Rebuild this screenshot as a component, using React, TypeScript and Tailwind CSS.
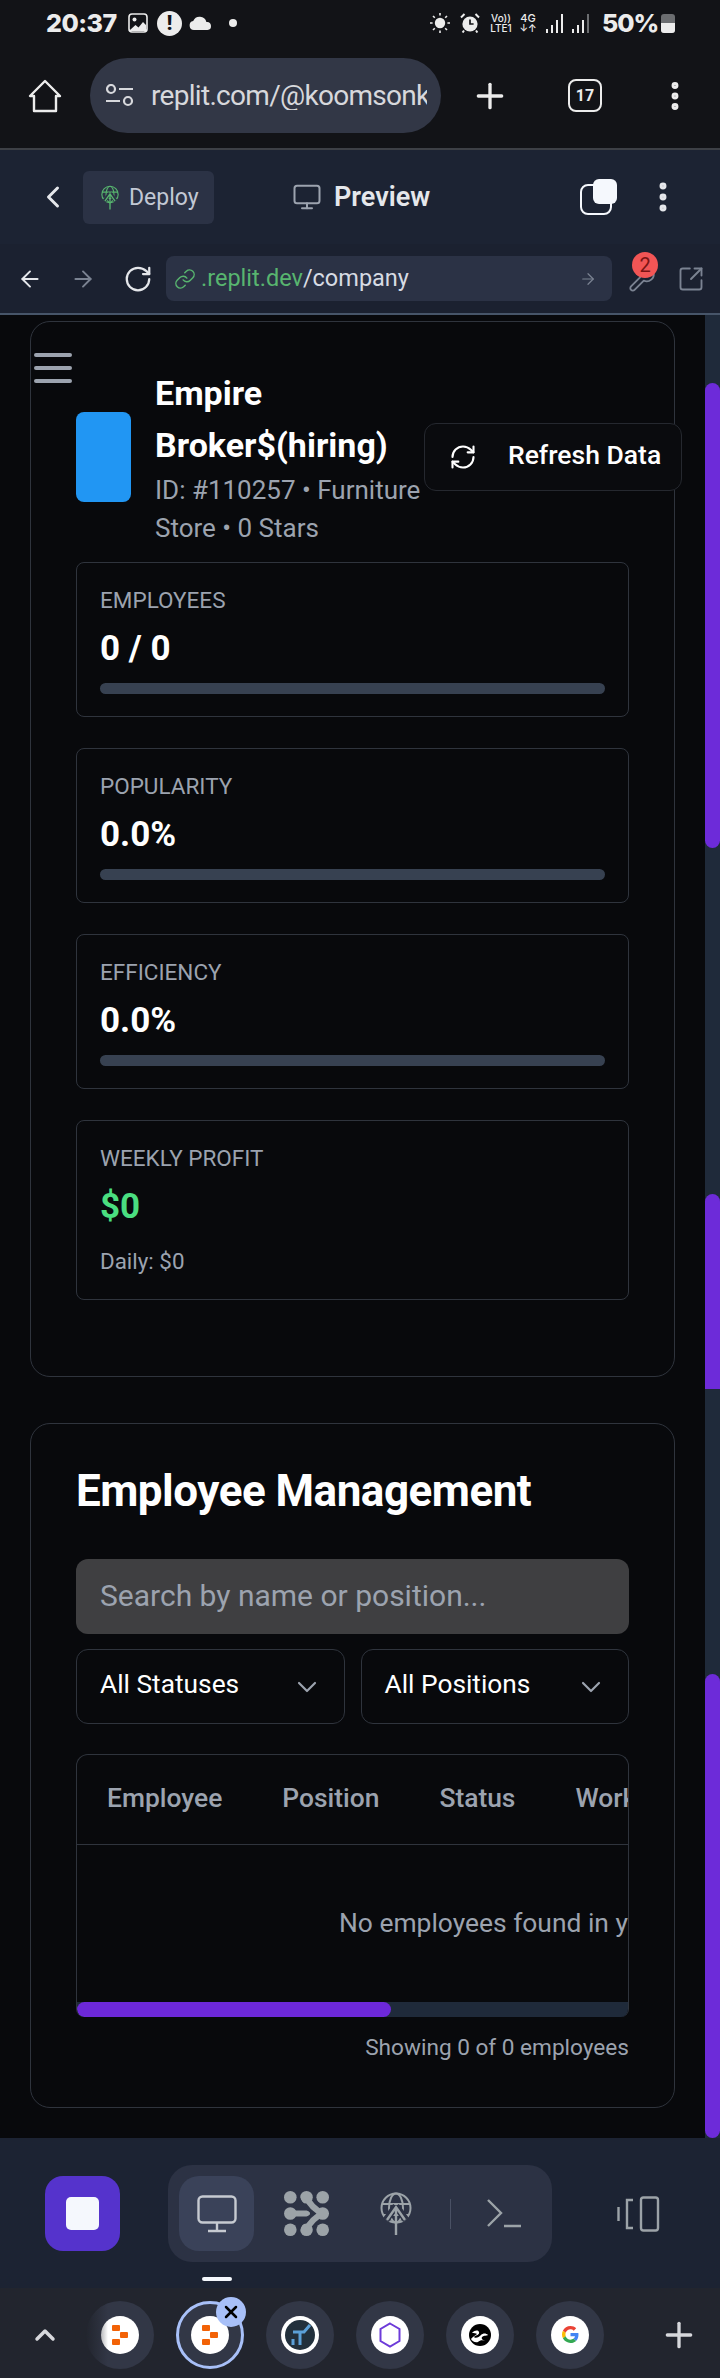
import { ArrowLeft, ArrowRight, ChevronDown, ChevronLeft, ChevronUp, EllipsisVertical, Link, Monitor, Plus, RefreshCw, RotateCw, SquareArrowOutUpRight, Wrench, X } from 'lucide-react'

const Sun = () => (
  <svg width="20" height="20" viewBox="0 0 20 20" className="shrink-0 text-[#ececec]">
    <circle cx="10" cy="10" r="5.2" fill="currentColor" />
    <path d="M10 0v2.6M10 17.4V20M0 10h2.6M17.4 10H20M3 3l1.8 1.8M15.2 15.2 17 17M3 17l1.8-1.8M15.2 4.8 17 3" stroke="currentColor" strokeWidth="1.6" />
  </svg>
)

const Alarm = () => (
  <svg width="20" height="20" viewBox="0 0 20 20" className="shrink-0">
    <circle cx="10" cy="11" r="7.6" fill="#ececec" />
    <path d="M10 6.5V11h3.6" stroke="#121317" strokeWidth="1.7" fill="none" />
    <path d="M1 4.5 4.5 1M19 4.5 15.5 1M4 17.5 2.6 19.5M16 17.5l1.4 2" stroke="#ececec" strokeWidth="2" />
  </svg>
)

const Signal = ({ dim }: { dim?: boolean }) => (
  <svg width="18" height="19" viewBox="0 0 18 19" className="shrink-0">
    <rect x="0" y="15" width="2" height="4" fill="#ececec" />
    <rect x="5" y="11" width="2" height="8" fill="#ececec" />
    <rect x="10" y="6" width="2" height="13" fill="#ececec" />
    <rect x="15" y="0" width="2" height="19" fill={dim ? '#6b6d70' : '#ececec'} />
  </svg>
)

const GlobeArrow = ({ className, cut }: { className: string; cut: string }) => (
  <svg viewBox="0 0 32 43" fill="none" stroke="currentColor" strokeWidth="2" className={className}>
    <circle cx="16" cy="16" r="14.5" />
    <ellipse cx="16" cy="16" rx="7" ry="14.5" />
    <path d="M2 12h28M4 23h24" />
    <path d="M16 14 6 28M16 14l10 14" stroke={cut} strokeWidth="7" />
    <path d="M16 43V15M7 28l9-13 9 13" strokeWidth="2.4" />
  </svg>
)

const Blobs = () => (
  <svg width="45" height="45" viewBox="0 0 45 45" fill="#9ca3a8" className="shrink-0">
    <circle cx="6.300" cy="6.300" r="6.300" />
    <circle cx="22.500" cy="6.300" r="6.300" />
    <circle cx="38.700" cy="6.300" r="6.300" />
    <circle cx="6.300" cy="22.500" r="6.300" />
    <circle cx="38.700" cy="22.500" r="6.300" />
    <circle cx="6.300" cy="38.700" r="6.300" />
    <circle cx="22.500" cy="38.700" r="6.300" />
    <circle cx="38.700" cy="38.700" r="6.300" />
    <path d="M22.500 6Q27 17 39 22.500 27 28 22.500 39" fill="none" stroke="#9ca3a8" strokeWidth="6" />
    <path d="M6 22.500h17" fill="none" stroke="#9ca3a8" strokeWidth="6" strokeLinecap="round" />
    <path d="M13.500 1Q17 16 29 22.500 17 29 13.500 44" fill="none" stroke="#2c3244" strokeWidth="1.700" />
  </svg>
)

const ReplitMark = () => (
  <svg width="16" height="20" viewBox="0 0 16 20" fill="#f26207">
    <rect x="0" y="0" width="8" height="6" rx="1" />
    <rect x="8" y="7" width="8" height="6" rx="1" />
    <rect x="0" y="14" width="8" height="6" rx="1" />
  </svg>
)

const TabCircle = ({ children, active }: { children: React.ReactNode; active?: boolean }) => (
  <div className={`relative flex h-[68px] w-[68px] shrink-0 items-center justify-center rounded-full bg-[#323746] ${active ? 'border-[3px] border-[#a8c0f8]' : ''}`}>
    <div className="flex h-[38px] w-[38px] items-center justify-center overflow-hidden rounded-full bg-white">{children}</div>
    {active && (
      <div className="absolute -right-[5px] -top-[7px] flex h-[30px] w-[30px] items-center justify-center rounded-full bg-[#a8c0f8]">
        <X size={20} strokeWidth={3} className="text-black" />
      </div>
    )}
  </div>
)

const StatCard = ({ label, value }: { label: string; value: string }) => (
  <div className="rounded-[8px] border border-[#2f343d] px-[23px] pb-[22px] pt-[23px]">
    <div className="text-[22.500px] leading-[28px] text-[#9ca3af]">{label}</div>
    <div className="mt-[15px] text-[35px] font-bold leading-[40px] text-white">{value}</div>
    <div className="mt-[14px] h-[11px] rounded-full bg-[#374151]" />
  </div>
)

export default function App() {
  return (
    <div className="flex h-[2378px] w-[720px] flex-col overflow-hidden bg-[#08090c] font-[Roboto,sans-serif]">
      {/* phone status bar */}
      <div className="flex h-[46px] shrink-0 items-center bg-[#121317] pl-[46px] pr-[45px] text-[#ececec]">
        <span className="w-[71px] font-[Inter,sans-serif] text-[25px] font-extrabold leading-none tracking-[-0.5px]">20:37</span>
        <svg width="20" height="20" viewBox="0 0 20 20" className="ml-[11px] shrink-0">
          <rect x="1" y="1" width="18" height="18" rx="3" fill="none" stroke="#ececec" strokeWidth="1.6" />
          <circle cx="6.5" cy="6.5" r="2" fill="#ececec" />
          <path d="M2 17l5.5-5 3 2.5L15 9l3 3v6H2z" fill="#ececec" />
        </svg>
        <div className="ml-[9px] flex h-[25px] w-[25px] items-center justify-center rounded-full bg-[#ececec] text-[20px] font-black leading-none text-[#121317]">!</div>
        <svg width="23" height="14" viewBox="0 0 23 14" className="ml-[7px] shrink-0">
          <path d="M5 14a4.5 4.5 0 0 1-.8-8.9A7 7 0 0 1 17.4 6 4 4 0 0 1 18.500 14z" fill="#ececec" />
        </svg>
        <div className="ml-[17px] h-[8px] w-[8px] rounded-full bg-[#ececec]" />
        <div className="ml-auto flex items-center">
          <Sun />
          <div className="ml-[10px]"><Alarm /></div>
          <div className="ml-[9px] flex w-[24px] flex-col items-center font-[Inter,sans-serif] text-[10px] font-medium leading-[10px]">
            <span>Vo))</span>
            <span>LTE1</span>
          </div>
          <div className="ml-[7px] flex w-[16px] flex-col items-center font-[Inter,sans-serif] text-[11px] font-medium leading-[10px]">
            <span>4G</span>
            <span className="text-[10px]">↓↑</span>
          </div>
          <div className="ml-[10px]"><Signal /></div>
          <div className="ml-[8px]"><Signal dim /></div>
          <span className="ml-[12px] w-[55px] font-[Inter,sans-serif] text-[25px] font-extrabold leading-none tracking-[-1px]">50%</span>
          <div className="ml-[4px] flex h-[19px] w-[14px] flex-col overflow-hidden rounded-[3px] bg-[#6b6d70]">
            <div className="mt-auto h-[10px] bg-[#ececec]" />
          </div>
        </div>
      </div>

      {/* browser bar */}
      <div className="flex h-[102px] shrink-0 items-center bg-[#121317] pb-[3px] text-[#ececec]">
        <svg width="34" height="34" viewBox="0 0 34 34" fill="none" stroke="#ececec" strokeWidth="2.4" strokeLinejoin="round" className="ml-[28px] shrink-0">
          <path d="M17 2 2 17h4v15h22V17h4z" />
        </svg>
        <div className="ml-[28px] flex h-[75px] w-[351px] items-center rounded-full bg-[#323746] pl-[16px]">
          <svg width="28" height="23" viewBox="0 0 28 23" fill="none" stroke="#d7d8dc" strokeWidth="2.2" className="shrink-0">
            <circle cx="5" cy="5" r="4" />
            <path d="M13 5h14M0 17h14" />
            <circle cx="22" cy="17" r="4" />
          </svg>
          <div className="ml-[17px] w-[276px] overflow-hidden whitespace-nowrap text-[28px] leading-none tracking-[-0.7px] text-[#d7d8dc]">replit.com/@koomsonkw</div>
        </div>
        <Plus size={40} strokeWidth={2} className="ml-[29px] shrink-0" />
        <div className="ml-[58px] flex h-[33px] w-[34px] items-center justify-center rounded-[8px] border-[2.5px] border-[#ececec] text-[16px] font-bold leading-none">17</div>
        <EllipsisVertical size={36} strokeWidth={2.6} className="ml-[55px] shrink-0" />
      </div>
      <div className="h-[2px] shrink-0 bg-[#3d4046]" />

      {/* replit header */}
      <div className="flex h-[94px] shrink-0 items-center bg-[#1c2333]">
        <ChevronLeft size={36} strokeWidth={2} className="ml-[35px] shrink-0 text-[#e5e7eb]" />
        <div className="ml-[12px] flex h-[53px] w-[131px] items-center rounded-[6px] bg-[#2b3245] pl-[18px]">
          <GlobeArrow className="h-[27px] w-[18px] shrink-0 text-[#58b56f]" cut="#2b3245" />
          <span className="ml-[10px] text-[23px] leading-none text-[#c2c8d4]">Deploy</span>
        </div>
        <Monitor size={30} strokeWidth={1.6} className="ml-[78px] shrink-0 text-[#9ca3af]" />
        <span className="ml-[12px] w-[95px] text-[27px] font-semibold leading-none text-[#e5e7eb]">Preview</span>
        <div className="relative ml-[151px] h-[36px] w-[37px] shrink-0">
          <div className="absolute bottom-0 left-0 h-[31px] w-[32px] rounded-[8px] border-[2.5px] border-[#f5f8fd]" />
          <div className="absolute right-0 top-0 h-[25px] w-[24px] rounded-[6px] bg-[#f5f8fd]" />
        </div>
        <EllipsisVertical size={38} strokeWidth={2.4} className="ml-[27px] shrink-0 text-[#e5e7eb]" />
      </div>

      {/* replit url row */}
      <div className="flex h-[69px] shrink-0 items-center bg-[#1b2130]">
        <ArrowLeft size={26} strokeWidth={1.8} className="ml-[17px] shrink-0 text-[#e5e7eb]" />
        <ArrowRight size={26} strokeWidth={1.8} className="ml-[27px] shrink-0 text-[#7b8392]" />
        <RotateCw size={30} strokeWidth={1.8} className="ml-[27px] shrink-0 text-[#e5e7eb]" />
        <div className="ml-[13px] flex h-[45px] w-[446px] shrink-0 items-center rounded-[8px] bg-[#2b3245] pl-[8px] pr-[15px]">
          <Link size={22} strokeWidth={1.6} className="shrink-0 text-[#58b56f]" />
          <span className="ml-[5px] text-[23.500px] leading-none text-[#58b56f]">.replit.dev</span>
          <span className="text-[23.500px] leading-none text-[#d7dbe3]">/company</span>
          <ArrowRight size={18} strokeWidth={1.6} className="ml-auto shrink-0 text-[#7b8392]" />
        </div>
        <div className="relative ml-[16px] shrink-0">
          <Wrench size={28} strokeWidth={1.6} className="text-[#7b8392]" />
          <div className="absolute -right-[2px] -top-[13px] flex h-[26px] w-[26px] items-center justify-center rounded-full bg-[#f25555] text-[20px] leading-none text-[#7a1414]">2</div>
        </div>
        <SquareArrowOutUpRight size={28} strokeWidth={1.6} className="ml-[21px] shrink-0 text-[#7b8392]" />
      </div>
      <div className="h-[2px] shrink-0 bg-[#475569]" />

      {/* page */}
      <div className="flex min-h-0 flex-1">
        <div className="w-[705px] shrink-0 pl-[30px] pt-[6px]">
          <div className="relative w-[645px] rounded-[20px] border border-[#2f343d] px-[45px] pb-[76px] pt-[45px]">
            <div className="absolute left-[3px] top-[31px] flex w-[38px] flex-col gap-[9px]">
              <div className="h-[4px] rounded-full bg-[#9ca3af]" />
              <div className="h-[4px] rounded-full bg-[#9ca3af]" />
              <div className="h-[4px] rounded-full bg-[#9ca3af]" />
            </div>
            <div className="mb-[15px] flex items-center">
              <div className="h-[90px] w-[55px] shrink-0 rounded-[8px] bg-[#2196f3]" />
              <div className="ml-[24px] min-w-0 flex-1">
                <div className="text-[34px] font-bold leading-[52px] text-white">Empire Broker$(hiring)</div>
                <div className="text-[26px] leading-[38px] text-[#9ca3af]">ID: #110257 • Furniture Store • 0 Stars</div>
              </div>
              <div className="-mr-[53px] flex h-[68px] w-[258px] shrink-0 items-center rounded-[12px] border border-[#25282f] bg-[#0a0b0e] pl-[24px]">
                <RefreshCw size={28} strokeWidth={1.8} className="shrink-0 text-white" />
                <span className="mb-[3px] ml-[31px] text-[26.500px] font-medium leading-none text-white">Refresh Data</span>
              </div>
            </div>
            <div className="flex flex-col gap-[31px]">
              <StatCard label="EMPLOYEES" value="0 / 0" />
              <StatCard label="POPULARITY" value="0.0%" />
              <StatCard label="EFFICIENCY" value="0.0%" />
              <div className="rounded-[8px] border border-[#2f343d] px-[23px] pb-[24px] pt-[23px]">
                <div className="text-[22.500px] leading-[28px] text-[#9ca3af]">WEEKLY PROFIT</div>
                <div className="mt-[15px] text-[35px] font-bold leading-[40px] text-[#4ade80]">$0</div>
                <div className="mt-[20px] text-[22.400px] leading-[28px] text-[#9ca3af]">Daily: $0</div>
              </div>
            </div>
          </div>

          <div className="mt-[46px] w-[645px] rounded-[20px] border border-[#2f343d] px-[45px] pb-[45px] pt-[45px]">
            <h2 className="text-[44px] font-bold leading-[44px] tracking-[-0.5px] text-white">Employee Management</h2>
            <div className="mt-[46px] flex h-[75px] items-center rounded-[12px] bg-[#3f3f41] px-[24px] pb-[3px] text-[30px] text-[#9ca3af]">Search by name or position...</div>
            <div className="mt-[15px] flex gap-[16px]">
              <div className="flex h-[75px] flex-1 items-center justify-between rounded-[12px] border border-[#2f343d] pl-[23px] pr-[21px] text-[26.300px] text-white">
                <span className="mb-[4px]">All Statuses</span>
                <ChevronDown size={32} strokeWidth={1.6} className="text-[#9ca3af]" />
              </div>
              <div className="flex h-[75px] flex-1 items-center justify-between rounded-[12px] border border-[#2f343d] pl-[23px] pr-[21px] text-[26.300px] text-white">
                <span className="mb-[4px]">All Positions</span>
                <ChevronDown size={32} strokeWidth={1.6} className="text-[#9ca3af]" />
              </div>
            </div>
            <div className="mt-[30px] overflow-hidden rounded-t-[12px] rounded-b-[8px] border border-b-0 border-[#2f343d]">
              <div className="flex h-[90px] gap-[60px] overflow-hidden whitespace-nowrap border-b border-[#2f343d] pl-[30px] pt-[28px] text-[26.400px] font-medium leading-[30px] text-[#9ca3af]">
                <span>Employee</span>
                <span>Position</span>
                <span>Status</span>
                <span>Work Stats</span>
              </div>
              <div className="flex h-[157px] items-center overflow-hidden whitespace-nowrap pl-[262px] text-[26.400px] text-[#9ca3af]">No employees found in your company</div>
              <div className="h-[15px] bg-[#1f2a3a]">
                <div className="h-[15px] w-[314px] rounded-full bg-[#6d28d9]" />
              </div>
            </div>
            <div className="mt-[17px] text-right text-[22.600px] leading-[28px] text-[#9ca3af]">Showing 0 of 0 employees</div>
          </div>
        </div>

        {/* page scrollbar */}
        <div className="w-[15px] shrink-0 bg-[#1f2a3a]">
          <div className="mt-[68px] h-[465px] rounded-full bg-[#6d2bd9]" />
          <div className="mt-[346px] h-[195px] rounded-t-full bg-[#6d2bd9]" />
          <div className="mt-[285px] h-[464px] rounded-full bg-[#6d2bd9]" />
        </div>
      </div>

      {/* replit bottom nav */}
      <div className="h-[150px] shrink-0 bg-[#1c2333] pt-[27px]">
        <div className="flex items-center pl-[45px]">
          <div className="flex h-[75px] w-[75px] items-center justify-center rounded-[18px] bg-[#5533cc]">
            <div className="h-[33px] w-[33px] rounded-[5px] bg-[#f5f8fd]" />
          </div>
          <div className="ml-[48px] flex h-[97px] w-[384px] items-center rounded-[24px] bg-[#2c3244]">
            <div className="ml-[11px] flex h-[75px] w-[75px] items-center justify-center rounded-[20px] bg-[#3a4259]">
              <svg width="40" height="38" viewBox="0 0 40 38" fill="none" stroke="#c6cad1" strokeWidth="2.4" className="shrink-0">
                <rect x="1.500" y="1.500" width="37" height="26" rx="4" />
                <path d="M20 28v7M11 36h18" />
              </svg>
            </div>
            <div className="ml-[30px]"><Blobs /></div>
            <div className="ml-[51px]"><GlobeArrow className="h-[43px] w-[32px] text-[#9ca3a8]" cut="#2c3244" /></div>
            <div className="ml-[38px] h-[30px] w-[1px] bg-[#4a5164]" />
            <svg width="34" height="29" viewBox="0 0 34 29" fill="none" stroke="#9ca3a8" strokeWidth="2.4" className="ml-[36px] shrink-0">
              <path d="M1 1l13 13L1 27M17 27h17" />
            </svg>
          </div>
          <svg width="43" height="36" viewBox="0 0 43 36" fill="none" stroke="#9ca3a8" strokeWidth="2.400" className="ml-[65px] shrink-0">
            <path d="M1.500 11v14M16 4H10v28h6" />
            <rect x="24" y="1.500" width="17" height="33" rx="2.500" />
          </svg>
        </div>
        <div className="ml-[202px] mt-[15px] h-[4px] w-[30px] rounded-full bg-[#f5f8fd]" />
      </div>

      {/* browser tab bar */}
      <div className="relative flex h-[90px] shrink-0 items-center bg-[#22252e] pt-[3px]">
        <ChevronUp size={32} strokeWidth={2.6} className="ml-[29px] shrink-0 text-[#d7d8dc]" />
        <div className="ml-[25px] flex gap-[22px]">
          <TabCircle><ReplitMark /></TabCircle>
          <TabCircle active><ReplitMark /></TabCircle>
          <TabCircle>
            <div className="flex h-[30px] w-[30px] items-center justify-center rounded-full bg-[#22303c]">
              <svg width="24" height="24" viewBox="0 0 24 24" fill="none" stroke="#5ba0d8" strokeWidth="3">
                <path d="M5 9h11l6-7M12 9v13M5 16v6" />
              </svg>
            </div>
          </TabCircle>
          <TabCircle>
            <svg width="22" height="26" viewBox="0 0 22 26" fill="none" stroke="#6d3bd9" strokeWidth="2">
              <path d="M11 1.500 20.500 7v12L11 24.500 1.500 19V7z" />
            </svg>
          </TabCircle>
          <TabCircle>
            <svg width="22" height="22" viewBox="0 0 22 22">
              <circle cx="11" cy="11" r="11" fill="#000" />
              <path d="M3 9c3-3 6-3 7-1 1 3-3 3-5 5 2 2 5 0 7-2s5-2 7 0c-1 1-4 0-6 2-1 2 1 3 3 4-2-1-5-1-7 1-3 1-6-1-7-3 1-2 4-3 6-5-1-1-3-1-5-1z" fill="#fff" />
            </svg>
          </TabCircle>
          <TabCircle>
            <svg width="17" height="17" viewBox="0 0 48 48">
              <path fill="#EA4335" d="M24 9.500c3.500 0 6.700 1.200 9.200 3.600l6.900-6.900C35.900 2.400 30.500 0 24 0 14.600 0 6.500 5.400 2.600 13.200l8 6.200C12.500 13.700 17.800 9.500 24 9.500z" />
              <path fill="#4285F4" d="M46.500 24.500c0-1.600-.1-3.100-.4-4.500H24v9h12.700c-.6 2.900-2.200 5.400-4.700 7.100l7.700 6c4.500-4.200 6.800-10.300 6.800-17.600z" />
              <path fill="#FBBC05" d="M10.500 28.600c-.5-1.400-.8-3-.8-4.600s.3-3.200.8-4.600l-8-6.200C.9 16.400 0 20.100 0 24s.9 7.600 2.600 10.800z" />
              <path fill="#34A853" d="M24 48c6.500 0 11.900-2.100 15.900-5.800l-7.700-6c-2.200 1.500-5 2.300-8.200 2.300-6.200 0-11.500-4.200-13.400-9.900l-8 6.200C6.500 42.600 14.600 48 24 48z" />
            </svg>
          </TabCircle>
        </div>
        <Plus size={40} strokeWidth={2} className="ml-[55px] shrink-0 text-[#d7d8dc]" />
        <div className="absolute left-[86px] top-[11px] h-[68px] w-[22px] bg-gradient-to-r from-[#22252e] to-transparent" />
      </div>
    </div>
  )
}
